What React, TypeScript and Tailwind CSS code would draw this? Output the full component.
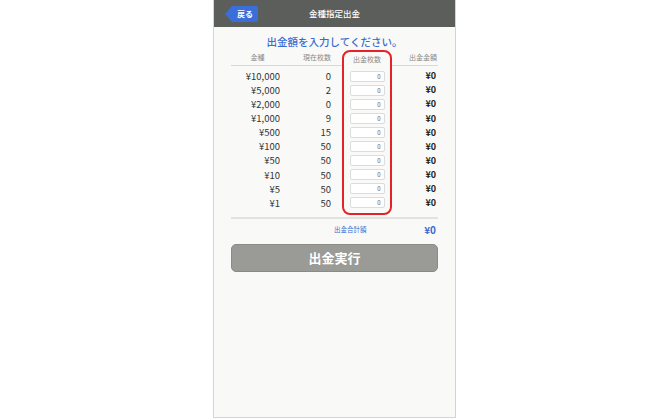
import React from 'react';

const rows = [
  { label: '¥10,000', count: 0 },
  { label: '¥5,000', count: 2 },
  { label: '¥2,000', count: 0 },
  { label: '¥1,000', count: 9 },
  { label: '¥500', count: 15 },
  { label: '¥100', count: 50 },
  { label: '¥50', count: 50 },
  { label: '¥10', count: 50 },
  { label: '¥5', count: 50 },
  { label: '¥1', count: 50 },
];

const font = { fontFamily: '"Noto Sans CJK JP", "Noto Sans", Roboto, sans-serif' };

function BackButton() {
  return (
    <div className="absolute left-[11px] top-[6px] flex h-[16px] items-center">
      <div className="h-[16px] w-[7px] bg-[#3b6ed8] [clip-path:polygon(100%_0,100%_100%,0_50%)]" />
      <div className="flex h-[16px] w-[26px] items-center justify-center rounded-r-[2px] bg-[#3b6ed8] text-[8px] font-bold leading-none text-white">
        戻る
      </div>
    </div>
  );
}

export default function App() {
  return (
    <div className="h-[418px] w-[670px] bg-white" style={font}>
      <div className="ml-[213px] flex h-[418px] w-[243px] flex-col border-x border-b border-[#d4d4d2] bg-[#f9f9f7]">
        <div className="relative flex h-[27px] shrink-0 items-center justify-center bg-[#5b5e5a]">
          <BackButton />
          <span className="text-[8.5px] font-medium text-white">金種指定出金</span>
        </div>

        <div className="px-[17px]">
          <div className="mt-[7px] flex h-[16px] items-center justify-center text-[10.5px] font-medium leading-none text-[#3a6bd3]">
            出金額を入力してください。
          </div>

          <div className="flex">
            <div className="w-[49px]">
              <div className="flex h-[16px] items-center justify-center border-b border-[#d8d8d6] pl-[4px] text-[7px] text-[#8a8a8a]">
                金種
              </div>
              <div className="mt-[3px]">
                {rows.map((r) => (
                  <div key={r.label} className="flex h-[14.1px] items-center justify-end text-[9.5px] text-[#333]">
                    {r.label}
                  </div>
                ))}
              </div>
            </div>

            <div className="w-[51px]">
              <div className="flex h-[16px] items-center justify-end border-b border-[#d8d8d6] text-[7px] text-[#8a8a8a]">
                現在枚数
              </div>
              <div className="mt-[3px]">
                {rows.map((r) => (
                  <div key={r.label} className="flex h-[14.1px] items-center justify-end text-[9.5px] text-[#333]">
                    {r.count}
                  </div>
                ))}
              </div>
            </div>

            <div className="w-[11px]">
              <div className="h-[16px] border-b border-[#d8d8d6]" />
            </div>

            <div className="w-[50px] rounded-[8px] border-2 border-[#e5222a] pb-[3px]">
              <div className="flex h-[14px] items-center justify-center text-[7px] text-[#8a8a8a]">
                出金枚数
              </div>
              <div className="mt-[3px]">
                {rows.map((r) => (
                  <div key={r.label} className="flex h-[14.1px] items-center justify-center">
                    <div className="flex h-[11px] w-[35px] items-center justify-end rounded-[2px] border border-[#dcdcdc] bg-white pr-[3px] text-[6px] text-[#555]">
                      0
                    </div>
                  </div>
                ))}
              </div>
            </div>

            <div className="flex-1">
              <div className="flex h-[16px] items-center justify-end border-b border-[#d8d8d6] pr-[1px] text-[7px] text-[#8a8a8a]">
                出金金額
              </div>
              <div className="mt-[3px]">
                {rows.map((r) => (
                  <div key={r.label} className="flex h-[14.1px] items-center justify-end pr-[2px] text-[9px] font-bold text-[#222]">
                    ¥0
                  </div>
                ))}
              </div>
            </div>
          </div>

          <div className="mt-[2px] border-t-2 border-[#e2e2e0]" />

          <div className="flex h-[22px] items-center">
            <div className="ml-[103px] text-[6.5px] text-[#3a6bd3]">出金合計額</div>
            <div className="ml-auto pr-[2px] text-[10px] font-bold text-[#3a6bd3]">¥0</div>
          </div>

          <div className="mt-[3px] flex h-[28px] items-center justify-center rounded-[5px] border border-[#8a8b87] bg-[#9a9b97] text-[13px] font-bold text-white">
            出金実行
          </div>
        </div>
      </div>
    </div>
  );
}
